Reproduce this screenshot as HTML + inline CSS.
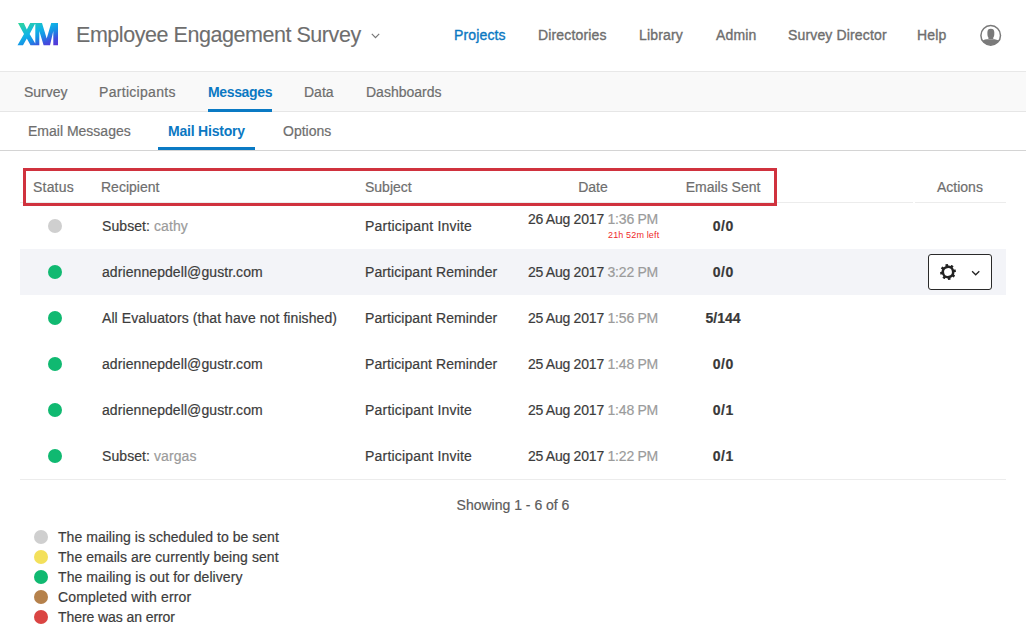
<!DOCTYPE html>
<html><head><meta charset="utf-8">
<style>
*{margin:0;padding:0;box-sizing:border-box}
html,body{width:1026px;height:632px;overflow:hidden;background:#fff;font-family:"Liberation Sans",sans-serif;font-size:14px;color:#3c3c3c}
.a{position:absolute;white-space:nowrap;line-height:16px;-webkit-text-stroke:0.2px currentColor}
.g{color:#6e6e6e}
.blue{color:#0b78c2}
.band{position:absolute;left:0;top:71px;width:1026px;height:41px;background:#f9f9f9;border-top:1px solid #e8e8e8;border-bottom:1px solid #e6e6e6}
.sub{position:absolute;left:0;top:150px;width:1026px;height:1px;background:#d4d4d4}
.ul{position:absolute;height:3px;background:#0a7ac4}
.dot{position:absolute;width:14px;height:14px;border-radius:50%}
.rowbg{position:absolute;left:20px;width:986px;height:46px;background:#f3f4f8}
.hline{position:absolute;height:1px;background:#ececec}
.lt{color:#9b9b9b}
.b{font-weight:bold;color:#383838}
.c{text-align:center}
.nv{-webkit-text-stroke:0.35px currentColor;letter-spacing:0.15px}
.rw{letter-spacing:0.08px}
</style></head><body>
<!-- logo -->
<svg style="position:absolute;left:0;top:0" width="70" height="70" viewBox="0 0 70 70">
<defs><linearGradient id="lg" x1="18" y1="23" x2="33" y2="56.3" gradientUnits="userSpaceOnUse">
<stop offset="0" stop-color="#30d898"/><stop offset="0.4" stop-color="#10b4e6"/><stop offset="0.58" stop-color="#1594e6"/><stop offset="0.8" stop-color="#3f50de"/><stop offset="1" stop-color="#5a34d8"/></linearGradient></defs>
<path fill="url(#lg)" d="M18,23 L23.8,23 L26.8,29.5 L30.2,23 L35.5,23 L29.6,34 L36.3,45.3 L30.5,45.3 L26.8,38.6 L23,45.3 L17.5,45.3 L24,34 Z M35.3,23 L42,23 L46.7,38.4 L51.2,23 L58,23 L58,45.3 L53.3,45.3 L53.3,31 L50,45.3 L43.6,45.3 L39.3,31 L39.3,45.3 L35.3,45.3 Z"/>
</svg>
<div class="a g" style="left:76px;top:24.5px;font-size:21.5px;line-height:20px;letter-spacing:-0.45px;color:#6e6e6e;-webkit-text-stroke:0.1px currentColor">Employee Engagement Survey</div>
<svg style="position:absolute;left:371px;top:33px" width="9" height="6" viewBox="0 0 9 6"><path d="M0.8,0.8 L4.5,4.6 L8.2,0.8" fill="none" stroke="#777" stroke-width="1.2"/></svg>
<div class="a blue nv" style="left:454px;top:27px">Projects</div>
<div class="a g nv" style="left:538px;top:27px">Directories</div>
<div class="a g nv" style="left:639px;top:27px">Library</div>
<div class="a g nv" style="left:716px;top:27px">Admin</div>
<div class="a g nv" style="left:788px;top:27px">Survey Director</div>
<div class="a g nv" style="left:917px;top:27px">Help</div>
<svg style="position:absolute;left:979px;top:24px" width="24" height="24" viewBox="0 0 24 24">
<defs><clipPath id="cc"><circle cx="11.7" cy="11.4" r="9.8"/></clipPath></defs>
<circle cx="11.7" cy="11.4" r="9.8" fill="none" stroke="#7a7a7a" stroke-width="1.5"/>
<g clip-path="url(#cc)" fill="#7a7a7a">
<path d="M8.4,8.2 Q8.4,4.8 11.85,4.8 Q15.3,4.8 15.3,8.2 L15.3,10.2 Q15.3,12.4 14.3,13.4 L14.3,15 L9.4,15 L9.4,13.4 Q8.4,12.4 8.4,10.2 Z"/>
<path d="M2,25 L2,18 Q3.5,15.8 8,15.3 L15.6,15.3 Q20,15.8 21.5,18 L21.5,25 Z"/>
</g></svg>

<div class="band"></div>
<div class="a g" style="left:24px;top:84px">Survey</div>
<div class="a g" style="left:99px;top:84px;letter-spacing:0.3px">Participants</div>
<div class="a blue b" style="left:208px;top:84px;color:#0b78c2;letter-spacing:-0.35px;-webkit-text-stroke:0">Messages</div>
<div class="a g" style="left:304px;top:84px">Data</div>
<div class="a g" style="left:366px;top:84px">Dashboards</div>
<div class="ul" style="left:208px;top:109px;width:64px"></div>

<div class="sub"></div>
<div class="a g" style="left:28px;top:123px">Email Messages</div>
<div class="a blue b" style="left:168px;top:123px;color:#0b78c2;letter-spacing:-0.2px;-webkit-text-stroke:0">Mail History</div>
<div class="a g" style="left:283px;top:123px">Options</div>
<div class="ul" style="left:158px;top:147px;width:97px"></div>

<!-- table header -->
<div class="hline" style="left:20px;top:202px;width:893px"></div>
<div class="hline" style="left:915px;top:202px;width:91px"></div>
<div class="a g" style="left:33px;top:179px;letter-spacing:0.2px">Status</div>
<div class="a g" style="left:101px;top:179px">Recipient</div>
<div class="a g" style="left:365px;top:179px">Subject</div>
<div class="a g c" style="left:543px;top:179px;width:100px">Date</div>
<div class="a g c" style="left:673px;top:179px;width:100px">Emails Sent</div>
<div class="a g" style="left:937px;top:179px">Actions</div>
<div style="position:absolute;left:23px;top:168px;width:754px;height:38px;border:3px solid #d0323e"></div>

<div class="rowbg" style="top:249px"></div>
<div class="hline" style="left:20px;top:479px;width:986px"></div>

<!-- rows -->
<div class="dot" style="left:48px;top:219px;background:#cfcfcf"></div>
<div class="a" style="letter-spacing:0.08px;left:102px;top:218px">Subset: <span class="lt">cathy</span></div>
<div class="a" style="letter-spacing:0.08px;left:365px;top:218px;letter-spacing:0.2px">Participant Invite</div>
<div class="a c" style="word-spacing:-0.4px;letter-spacing:-0.15px;left:493px;top:211px;width:200px">26 Aug 2017 <span class="lt">1:36 PM</span></div>
<div class="a" style="left:608px;top:230px;font-size:9px;line-height:10px;color:#ee2a2a;letter-spacing:0.15px;-webkit-text-stroke:0">21h 52m left</div>
<div class="a b c" style="left:673px;top:218px;width:100px;letter-spacing:0.6px;text-indent:0.6px">0/0</div>

<div class="dot" style="left:48px;top:265px;background:#10b971"></div>
<div class="a" style="letter-spacing:0.08px;left:102px;top:264px">adriennepdell@gustr.com</div>
<div class="a" style="letter-spacing:0.08px;left:365px;top:264px">Participant Reminder</div>
<div class="a c" style="word-spacing:-0.4px;letter-spacing:-0.15px;left:493px;top:264px;width:200px">25 Aug 2017 <span class="lt">3:22 PM</span></div>
<div class="a b c" style="left:673px;top:264px;width:100px;letter-spacing:0.6px;text-indent:0.6px">0/0</div>
<div style="position:absolute;left:928px;top:254px;width:64px;height:36px;border:1.5px solid #2a2a2a;border-radius:3px;background:#fff"></div>
<svg style="position:absolute;left:938px;top:262px" width="20" height="20" viewBox="0 0 20 20">
<g transform="translate(10,10) rotate(-10)" fill="#222">
<circle r="6.4"/>
<g id="t"><rect x="-1.35" y="-7.9" width="2.7" height="3" rx="0.5"/></g>
<use href="#t" transform="rotate(45)"/><use href="#t" transform="rotate(90)"/><use href="#t" transform="rotate(135)"/>
<use href="#t" transform="rotate(180)"/><use href="#t" transform="rotate(225)"/><use href="#t" transform="rotate(270)"/><use href="#t" transform="rotate(315)"/>
<circle r="3.9" fill="#fff"/>
</g></svg>
<svg style="position:absolute;left:971px;top:270px" width="10" height="6" viewBox="0 0 10 6"><path d="M1.1,1.3 L4.7,4.8 L8.3,1.3" fill="none" stroke="#222" stroke-width="1.3"/></svg>

<div class="dot" style="left:48px;top:311px;background:#10b971"></div>
<div class="a" style="letter-spacing:0.08px;left:102px;top:310px">All Evaluators (that have not finished)</div>
<div class="a" style="letter-spacing:0.08px;left:365px;top:310px">Participant Reminder</div>
<div class="a c" style="word-spacing:-0.4px;letter-spacing:-0.15px;left:493px;top:310px;width:200px">25 Aug 2017 <span class="lt">1:56 PM</span></div>
<div class="a b c" style="left:673px;top:310px;width:100px">5/144</div>

<div class="dot" style="left:48px;top:357px;background:#10b971"></div>
<div class="a" style="letter-spacing:0.08px;left:102px;top:356px">adriennepdell@gustr.com</div>
<div class="a" style="letter-spacing:0.08px;left:365px;top:356px">Participant Reminder</div>
<div class="a c" style="word-spacing:-0.4px;letter-spacing:-0.15px;left:493px;top:356px;width:200px">25 Aug 2017 <span class="lt">1:48 PM</span></div>
<div class="a b c" style="left:673px;top:356px;width:100px;letter-spacing:0.6px;text-indent:0.6px">0/0</div>

<div class="dot" style="left:48px;top:403px;background:#10b971"></div>
<div class="a" style="letter-spacing:0.08px;left:102px;top:402px">adriennepdell@gustr.com</div>
<div class="a" style="letter-spacing:0.08px;left:365px;top:402px;letter-spacing:0.2px">Participant Invite</div>
<div class="a c" style="word-spacing:-0.4px;letter-spacing:-0.15px;left:493px;top:402px;width:200px">25 Aug 2017 <span class="lt">1:48 PM</span></div>
<div class="a b c" style="left:673px;top:402px;width:100px;letter-spacing:0.6px;text-indent:0.6px">0/1</div>

<div class="dot" style="left:48px;top:449px;background:#10b971"></div>
<div class="a" style="letter-spacing:0.08px;left:102px;top:448px">Subset: <span class="lt">vargas</span></div>
<div class="a" style="letter-spacing:0.08px;left:365px;top:448px;letter-spacing:0.2px">Participant Invite</div>
<div class="a c" style="word-spacing:-0.4px;letter-spacing:-0.15px;left:493px;top:448px;width:200px">25 Aug 2017 <span class="lt">1:22 PM</span></div>
<div class="a b c" style="left:673px;top:448px;width:100px;letter-spacing:0.6px;text-indent:0.6px">0/1</div>

<div class="a c" style="left:413px;top:497px;width:200px;color:#5c5c5c">Showing 1 - 6 of 6</div>

<!-- legend -->
<div class="dot" style="left:34px;top:530px;background:#cfcfcf"></div>
<div class="a" style="left:58px;top:529px;letter-spacing:0.04px">The mailing is scheduled to be sent</div>
<div class="dot" style="left:34px;top:550px;background:#f3e05b"></div>
<div class="a" style="left:58px;top:549px;letter-spacing:0.055px">The emails are currently being sent</div>
<div class="dot" style="left:34px;top:570px;background:#10b971"></div>
<div class="a" style="left:58px;top:569px;letter-spacing:0.08px">The mailing is out for delivery</div>
<div class="dot" style="left:34px;top:590px;background:#b5814b"></div>
<div class="a" style="left:58px;top:589px;letter-spacing:0.17px">Completed with error</div>
<div class="dot" style="left:34px;top:610px;background:#da4543"></div>
<div class="a" style="left:58px;top:609px;letter-spacing:-0.08px">There was an error</div>
</body></html>
